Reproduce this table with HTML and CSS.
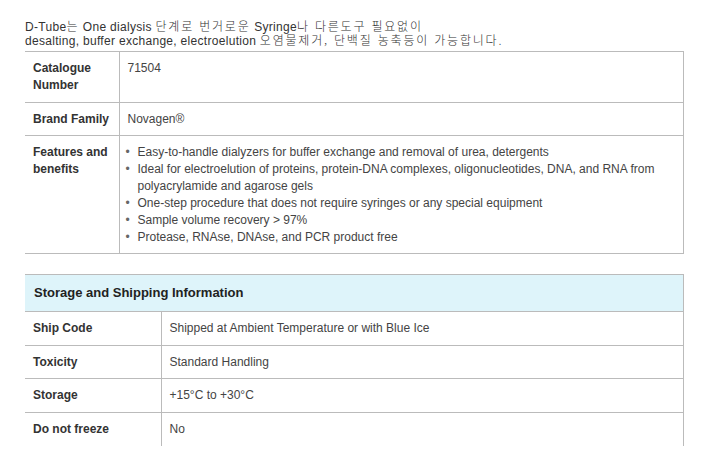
FILE: index.html
```html
<!DOCTYPE html>
<html lang="ko">
<head>
<meta charset="utf-8">
<title>D-Tube</title>
<link rel="stylesheet" href="styles.css">
</head>
<body>
<div class="page">
  <p class="intro">D-Tube<span class="ko">는</span> One dialysis <span class="ko">단계로 번거로운</span> Syringe<span class="ko">나 다른도구 필요없이</span><br>desalting, buffer exchange, electroelution <span class="ko">오염물제거, 단백질 농축등이 가능합니다.</span></p>

  <table class="spec spec-main">
    <colgroup><col class="c1"><col></colgroup>
    <tr class="r-tall">
      <th>Catalogue<br>Number</th>
      <td>71504</td>
    </tr>
    <tr class="r-brand">
      <th>Brand Family</th>
      <td>Novagen®</td>
    </tr>
    <tr class="r-feat">
      <th>Features and<br>benefits</th>
      <td>
        <ul class="bullets">
          <li>Easy-to-handle dialyzers for buffer exchange and removal of urea, detergents</li>
          <li>Ideal for electroelution of proteins, protein-DNA complexes, oligonucleotides, DNA, and RNA from polyacrylamide and agarose gels</li>
          <li>One-step procedure that does not require syringes or any special equipment</li>
          <li>Sample volume recovery &gt; 97%</li>
          <li>Protease, RNAse, DNAse, and PCR product free</li>
        </ul>
      </td>
    </tr>
  </table>

  <table class="spec spec-ship">
    <colgroup><col class="c1"><col></colgroup>
    <tr class="head">
      <th colspan="2">Storage and Shipping Information</th>
    </tr>
    <tr>
      <th>Ship Code</th>
      <td>Shipped at Ambient Temperature or with Blue Ice</td>
    </tr>
    <tr class="r-short">
      <th>Toxicity</th>
      <td>Standard Handling</td>
    </tr>
    <tr>
      <th>Storage</th>
      <td>+15°C to +30°C</td>
    </tr>
    <tr class="last">
      <th>Do not freeze</th>
      <td>No</td>
    </tr>
  </table>
</div>
</body>
</html>
```

FILE: styles.css
```css
html, body {
  margin: 0;
  padding: 0;
  background: #fff;
}

.page {
  padding: 20px 0 0 25px;
  width: 659px;
}

.intro {
  margin: 0 0 3px;
  font-family: "Liberation Sans", "Noto Sans CJK KR", sans-serif;
  font-size: 12px;
  line-height: 14px;
  letter-spacing: 0.3px;
  color: #333;
}

.intro .ko {
  font-family: "Noto Sans CJK KR", sans-serif;
  font-weight: 300;
  line-height: 10px;
  letter-spacing: 1.8px;
}

.spec {
  width: 659px;
  border-collapse: collapse;
  font-family: "Liberation Sans", Arial, sans-serif;
  font-size: 12px;
  line-height: 17px;
}

.spec th,
.spec td {
  text-align: left;
  vertical-align: top;
  padding: 8px;
  border-top: 1px solid #bbb;
  border-bottom: 1px solid #bbb;
  border-right: 1px solid #bbb;
}

.spec th {
  font-weight: bold;
  color: #333;
}

.spec td {
  color: #444;
}

.spec-main .c1 {
  width: 94px;
}

.spec-main .r-brand th,
.spec-main .r-brand td {
  padding-bottom: 7px;
}

.spec-main .r-feat th,
.spec-main .r-feat td {
  padding-bottom: 7px;
}

.bullets {
  list-style: none;
  margin: 0 0 0 -2px;
  padding: 0;
}

.bullets li {
  display: flex;
}

.bullets li::before {
  content: "•";
  flex: 0 0 12px;
  color: #666;
}

.spec-ship {
  margin-top: 20px;
}

.spec-ship .c1 {
  width: 136px;
}

.spec-ship .head th {
  background: #def4fa;
  color: #222;
  font-size: 13px;
  padding: 9px 9px 10px;
}

.spec-ship .r-short th,
.spec-ship .r-short td {
  padding-bottom: 7px;
}

.spec-ship tr.last th,
.spec-ship tr.last td {
  border-bottom: none;
}
```
